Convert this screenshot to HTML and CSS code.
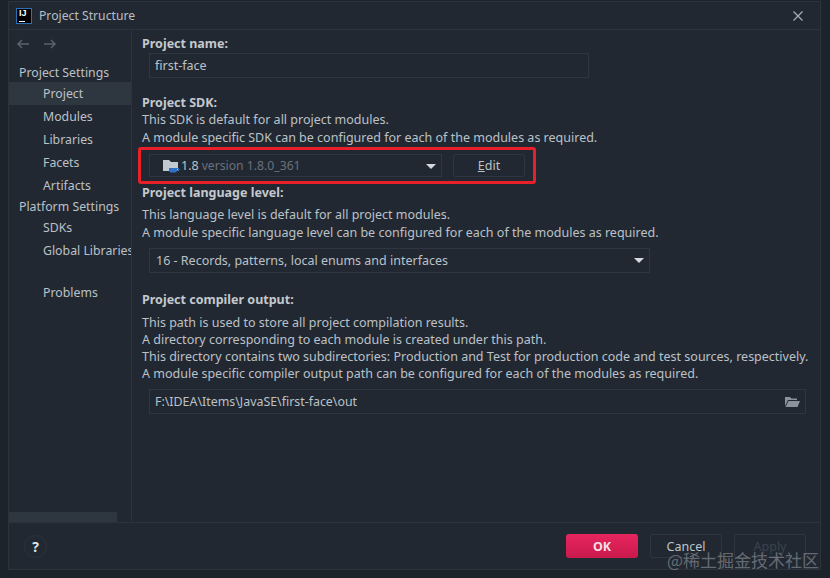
FILE: index.html
```html
<!DOCTYPE html>
<html lang="en">
<head>
<meta charset="utf-8">
<title>Project Structure</title>
<link rel="stylesheet" href="styles.css">
</head>
<body>
<div class="window">
  <header class="titlebar">
    <div class="logo"><span class="logo-text">IJ</span><span class="logo-bar"></span></div>
    <span class="title">Project Structure</span>
    <svg class="close" width="10" height="10" viewBox="0 0 10 10"><path d="M0.500 0.500l9 9M9.500 0.500l-9 9" stroke="#a9afb6" stroke-width="1.200" fill="none"/></svg>
  </header>
  <div class="body">
    <aside class="sidebar">
      <div class="nav">
        <svg width="14" height="12" viewBox="0 0 14 12"><path d="M13 6H2M6 2L2 6l4 4" stroke="#59616a" stroke-width="1.500" fill="none"/></svg>
        <svg width="14" height="12" viewBox="0 0 14 12"><path d="M1 6h11M8 2l4 4-4 4" stroke="#59616a" stroke-width="1.500" fill="none"/></svg>
      </div>
      <div class="group g1">Project Settings</div>
      <div class="item selected">Project</div>
      <div class="item">Modules</div>
      <div class="item">Libraries</div>
      <div class="item">Facets</div>
      <div class="item">Artifacts</div>
      <div class="group g2">Platform Settings</div>
      <div class="item">SDKs</div>
      <div class="item">Global Libraries</div>
      <div class="item problems">Problems</div>
      <div class="scrollbar"></div>
    </aside>
    <main class="content">
      <h2 class="label first">Project name:</h2>
      <div class="field name-field">first-face</div>
      <h2 class="label sdk">Project SDK:</h2>
      <p class="line">This SDK is default for all project modules.</p>
      <p class="line">A module specific SDK can be configured for each of the modules as required.</p>
      <div class="sdk-row">
        <div class="field combo sdk-combo">
          <svg class="jdk" width="18" height="16" viewBox="0 0 18 16">
            <path d="M1 2h6l2 2h7v9H1z" fill="#c3c9d0"/>
            <path d="M7 10h8v2.500a2 2 0 0 1-2 2H9a2 2 0 0 1-2-2z" fill="#2f72c4"/>
            <path d="M15 10.500h2v2h-2" stroke="#2f72c4" fill="none"/>
          </svg>
          <span class="sdk-name">1.8</span><span class="sdk-version">version 1.8.0_361</span>
          <span class="arrow"></span>
        </div>
        <div class="button edit"><span><u>E</u>dit</span></div>
      </div>
      <h2 class="label lang">Project language level:</h2>
      <p class="line lang-first">This language level is default for all project modules.</p>
      <p class="line">A module specific language level can be configured for each of the modules as required.</p>
      <div class="field combo lang-combo">16 - Records, patterns, local enums and interfaces<span class="arrow"></span></div>
      <h2 class="label output">Project compiler output:</h2>
      <p class="line tight out-first">This path is used to store all project compilation results.</p>
      <p class="line tight">A directory corresponding to each module is created under this path.</p>
      <p class="line tight">This directory contains two subdirectories: Production and Test for production code and test sources, respectively.</p>
      <p class="line tight">A module specific compiler output path can be configured for each of the modules as required.</p>
      <div class="field path-field"><span class="path-text">F:\IDEA\Items\JavaSE\first-face\out</span>
        <svg width="16" height="12" viewBox="0 0 16 12"><path d="M1 1h5l1.500 1.500H13V4H4L1 10z" fill="#8a929b"/><path d="M4.500 5H16l-2.500 6H1.500z" fill="#8a929b"/></svg>
      </div>
    </main>
  </div>
  <footer class="footer">
    <div class="help">?</div>
    <div class="actions">
      <div class="button ok">OK</div>
      <div class="button cancel">Cancel</div>
      <div class="button apply">Apply</div>
    </div>
  </footer>
</div>
<div class="highlight"></div>
<div class="watermark">@稀土掘金技术社区</div>
</body>
</html>
```
FILE: styles.css
```css
* { box-sizing: border-box; }
html, body { margin: 0; padding: 0; }
body {
  width: 830px;
  height: 578px;
  overflow: hidden;
  position: relative;
  background: #1d232b;
  padding: 1px 0 0 8px;
  font-family: "Noto Sans", "Open Sans", sans-serif;
  font-size: 12.5px;
  color: #bcc1c7;
}
.window {
  width: 813px;
  height: 569px;
  background: #212832;
  border: 1px solid #2c333d;
  display: flex;
  flex-direction: column;
}
.titlebar {
  height: 28px;
  flex: none;
  display: flex;
  align-items: center;
  padding: 0 11px 0 7px;
  border-bottom: 1px solid #2c333d;
}
.logo {
  width: 16px;
  height: 16px;
  background: #000;
  border: 1px solid #2e6fb5;
  position: relative;
  margin-right: 7px;
}
.logo-text {
  position: absolute;
  left: 2px;
  top: -2px;
  font-family: "Liberation Sans", sans-serif;
  font-weight: 700;
  font-size: 9px;
  color: #fff;
  line-height: 12px;
}
.logo-bar {
  position: absolute;
  left: 2px;
  bottom: 1px;
  width: 6px;
  height: 1px;
  background: #fff;
}
.title { flex: 1; font-size: 12.2px; color: #b8bec4; }
.close { margin-right: 6px; }
.body { flex: 1; display: flex; min-height: 0; }
.sidebar {
  width: 123px;
  flex: none;
  font-size: 12.3px;
  border-right: 1px solid #2c333d;
  position: relative;
  overflow: hidden;
  white-space: nowrap;
}
.nav {
  height: 29px;
  padding: 8px 0 0 7px;
  display: flex;
  gap: 13px;
}
.group { height: 21px; line-height: 21px; padding-left: 10px; }
.g1 { margin-top: 2px; padding-top: 1px; }
.g2 { height: 19px; line-height: 19px; }
.item { height: 23px; line-height: 23px; padding-left: 34px; }
.selected { background: #2e3640; }
.problems { margin-top: 19px; }
.scrollbar {
  position: absolute;
  left: 0;
  bottom: 0;
  width: 108px;
  height: 10px;
  background: #2e3640;
}
.content { flex: 1; padding: 0 0 0 10px; min-width: 0; white-space: nowrap; }
.label {
  margin: 0;
  font-size: 12.5px;
  font-weight: 700;
  line-height: 17px;
  color: #c4c8cd;
}
.first { margin-top: 5px; }
.sdk { margin-top: 16px; }
.lang { margin-top: 7px; }
.output { margin-top: 18px; }
.line { margin: 0; height: 17.5px; line-height: 17.5px; }
.tight { height: 17px; line-height: 17px; }
.lang-first { margin-top: 5px; }
.out-first { margin-top: 6px; }
.field {
  height: 25px;
  border: 1px solid #2f3640;
  display: flex;
  align-items: center;
  margin-left: 7px;
  padding-left: 6px;
}
.name-field { width: 440px; margin-top: 1px; padding-left: 5px; }
.sdk-row { display: flex; gap: 11px; margin: 8px 0 0 7px; align-items: center; }
.combo { position: relative; }
.sdk-combo { margin-left: 0; width: 293px; height: 23px; padding-left: 12px; }
.jdk { margin-right: 1px; }
.sdk-name { margin-right: 3px; }
.sdk-version { color: #6a717a; font-size: 12.2px; }
.arrow {
  position: absolute;
  right: 5px;
  top: 9px;
  width: 0;
  height: 0;
  border-left: 5px solid transparent;
  border-right: 5px solid transparent;
  border-top: 5px solid #d5d8dc;
}
.button {
  border: 1px solid #2f3640;
  border-radius: 3px;
  display: flex;
  align-items: center;
  justify-content: center;
  width: 72px;
  height: 24px;
}
.edit { height: 23px; }
.lang-combo { width: 501px; margin-top: 7px; }
.path-field { width: 657px; margin-top: 7px; justify-content: space-between; padding: 0 5px; }
.path-text { font-size: 12.4px; }
.footer {
  height: 47px;
  flex: none;
  border-top: 1px solid #2c333d;
  display: flex;
  align-items: center;
  justify-content: space-between;
  padding: 0 14px 0 15px;
}
.help {
  width: 23px;
  height: 23px;
  border: 1px solid #2c333d;
  border-radius: 50%;
  display: flex;
  align-items: center;
  justify-content: center;
  font-size: 14px;
  font-weight: 700;
  color: #dfe2e5;
}
.actions { display: flex; gap: 12px; }
.ok {
  border: none;
  background: linear-gradient(#e8265f, #c91a4c);
  color: #f6dfe6;
  font-weight: 700;
}
.cancel { color: #bfc4ca; }
.apply { color: #3c434d; }
.highlight {
  position: absolute;
  left: 138px;
  top: 147px;
  width: 398px;
  height: 37px;
  border: 3px solid #e8202a;
  border-radius: 3px;
}
.watermark {
  position: absolute;
  left: 667px;
  top: 549px;
  font-family: "Noto Sans CJK SC", sans-serif;
  font-size: 17px;
  line-height: 22px;
  color: rgba(225, 230, 235, 0.36);
  white-space: nowrap;
}
```
